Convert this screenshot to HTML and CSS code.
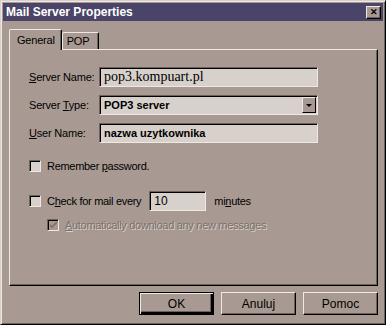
FILE: index.html
```html
<!DOCTYPE html>
<html lang="pl">
    <head>
        <meta charset="UTF-8">
        <title>Mail Server Properties</title>
        <link rel="stylesheet" href="styles.css">
    </head>

    <body>
        <div class="window">
            <div class="titlebar">
                <span class="title">Mail Server Properties</span>
                <button class="close" type="button">&#x2715;</button>
            </div>

            <div class="content">
                <div class="tabs">
                    <div class="tab active">General</div>
                    <div class="tab">POP</div>
                </div>

                <div class="panel">
                    <div class="form">
                        <label class="label"><u>S</u>erver Name:</label>
                        <div class="field serif">pop3.kompuart.pl</div>

                        <label class="label">Server <u>T</u>ype:</label>
                        <div class="field bold select">
                            <span>POP3 server</span>
                            <span class="arrow"></span>
                        </div>

                        <label class="label"><u>U</u>ser Name:</label>
                        <div class="field bold">nazwa uzytkownika</div>
                    </div>

                    <div class="check-row remember">
                        <span class="box"></span>
                        <span>Remember <u>p</u>assword.</span>
                    </div>

                    <div class="check-row every">
                        <span class="box"></span>
                        <span>C<u>h</u>eck for mail every</span>
                        <div class="field small">10</div>
                        <span>mi<u>n</u>utes</span>
                    </div>

                    <div class="check-row auto disabled">
                        <span class="box checked">
                            <svg width="9" height="9" viewBox="0 0 9 9">
                                <path d="M1 4 L3 6 L8 1" stroke="#7c706a" stroke-width="1.6" fill="none"/>
                            </svg>
                        </span>
                        <span><u>A</u>utomatically download any new messages</span>
                    </div>
                </div>

                <div class="buttons">
                    <button class="btn default" type="button">OK</button>
                    <button class="btn" type="button">Anuluj</button>
                    <button class="btn" type="button">Pomoc</button>
                </div>
            </div>
        </div>
    </body>
</html>
```

FILE: styles.css
```css
body {
    margin: 0;
    background-color: #a89a93;
    font-family: 'Liberation Sans', Arial, sans-serif;
    font-size: 11px;
    color: #000;
}

.window {
    width: 386px;
    height: 325px;
    box-sizing: border-box;
    border-top: 1px solid #d8d0cb;
    border-left: 1px solid #d8d0cb;
    border-right: 1px solid #000;
    border-bottom: 1px solid #000;
    box-shadow: inset 1px 1px 0 #efe8e3, inset -1px -1px 0 #6c625c;
    padding: 2px;
}

.titlebar {
    display: flex;
    justify-content: space-between;
    align-items: center;
    height: 18px;
    padding: 0 2px 0 3px;
    background-color: #4a4468;
}

.title {
    color: #fff;
    font-weight: bold;
    font-size: 12px;
}

.close {
    width: 15px;
    height: 13px;
    padding: 0;
    font-size: 9px;
    font-weight: bold;
    line-height: 10px;
    background-color: #a89a93;
    border-top: 1px solid #efe8e3;
    border-left: 1px solid #efe8e3;
    border-right: 1px solid #000;
    border-bottom: 1px solid #000;
    box-shadow: inset -1px -1px 0 #6c625c;
    color: #000;
}

.content {
    padding: 8px 5px 0 6px;
}

.tabs {
    display: flex;
    align-items: flex-end;
    height: 20px;
    position: relative;
    z-index: 1;
}

.tab {
    height: 16px;
    padding: 0 9px 0 4px;
    line-height: 17px;
    font-size: 11px;
    letter-spacing: -0.2px;
    border-top: 1px solid #efe8e3;
    border-left: 1px solid #efe8e3;
    border-right: 1px solid #000;
    box-shadow: inset -1px 0 0 #6c625c;
    border-radius: 2px 2px 0 0;
}

.tab.active {
    height: 20px;
    padding: 0 6px 0 7px;
    line-height: 21px;
    margin-bottom: -1px;
    background-color: #a89a93;
}

.panel {
    height: 237px;
    box-sizing: border-box;
    border-top: 1px solid #efe8e3;
    border-left: 1px solid #efe8e3;
    border-right: 1px solid #000;
    border-bottom: 1px solid #000;
    box-shadow: inset -1px -1px 0 #6c625c;
    padding: 17px 0 0 19px;
}

.form {
    display: grid;
    grid-template-columns: 70px 219px;
    row-gap: 8px;
    align-items: center;
}

.label {
    font-size: 11px;
    letter-spacing: -0.2px;
    white-space: nowrap;
}

.field {
    height: 20px;
    box-sizing: border-box;
    display: flex;
    align-items: center;
    padding-left: 4px;
    background-color: #d8d0cb;
    border-top: 1px solid #6c625c;
    border-left: 1px solid #6c625c;
    border-right: 1px solid #efe8e3;
    border-bottom: 1px solid #efe8e3;
    box-shadow: inset 1px 1px 0 #000;
    font-size: 13px;
}

.serif {
    font-family: 'Liberation Serif', 'Times New Roman', serif;
    font-size: 14px;
}

.bold {
    font-weight: bold;
    font-size: 11px;
}

.select {
    justify-content: space-between;
    padding-right: 1px;
}

.arrow {
    width: 14px;
    height: 16px;
    box-sizing: border-box;
    display: flex;
    align-items: center;
    justify-content: center;
    background-color: #a89a93;
    border-top: 1px solid #efe8e3;
    border-left: 1px solid #efe8e3;
    border-right: 1px solid #000;
    border-bottom: 1px solid #000;
}

.arrow::before {
    content: "";
    border-left: 3px solid transparent;
    border-right: 3px solid transparent;
    border-top: 3px solid #000;
}

.check-row {
    display: flex;
    align-items: center;
    gap: 6px;
    font-size: 11px;
    letter-spacing: -0.3px;
    white-space: nowrap;
}

.remember {
    margin-top: 17px;
}

.every {
    margin-top: 19px;
}

.every .field {
    width: 57px;
    margin: 0 2px 0 2px;
    font-size: 12px;
    letter-spacing: 0;
}

.auto {
    margin-top: 8px;
    margin-left: 18px;
}

.box {
    width: 12px;
    height: 12px;
    box-sizing: border-box;
    display: flex;
    align-items: center;
    justify-content: center;
    background-color: #d8d0cb;
    border-top: 1px solid #6c625c;
    border-left: 1px solid #6c625c;
    border-right: 1px solid #efe8e3;
    border-bottom: 1px solid #efe8e3;
    box-shadow: inset 1px 1px 0 #000;
}

.disabled {
    color: #7c706a;
    text-shadow: 1px 1px 0 #d8d0cb;
}

.disabled .box {
    background-color: #a89a93;
}

.buttons {
    display: flex;
    justify-content: flex-end;
    gap: 7px;
    margin-top: 6px;
}

.btn {
    width: 75px;
    height: 23px;
    padding: 0;
    font-family: 'Liberation Sans', Arial, sans-serif;
    font-size: 12px;
    color: #000;
    background-color: #a89a93;
    border-top: 1px solid #efe8e3;
    border-left: 1px solid #efe8e3;
    border-right: 1px solid #000;
    border-bottom: 1px solid #000;
    box-shadow: inset -1px -1px 0 #6c625c;
}

.btn.default {
    border: 1px solid #000;
    box-shadow: inset 1px 1px 0 #efe8e3, inset -2px -2px 0 #000, inset -3px -3px 0 #6c625c;
}
```
